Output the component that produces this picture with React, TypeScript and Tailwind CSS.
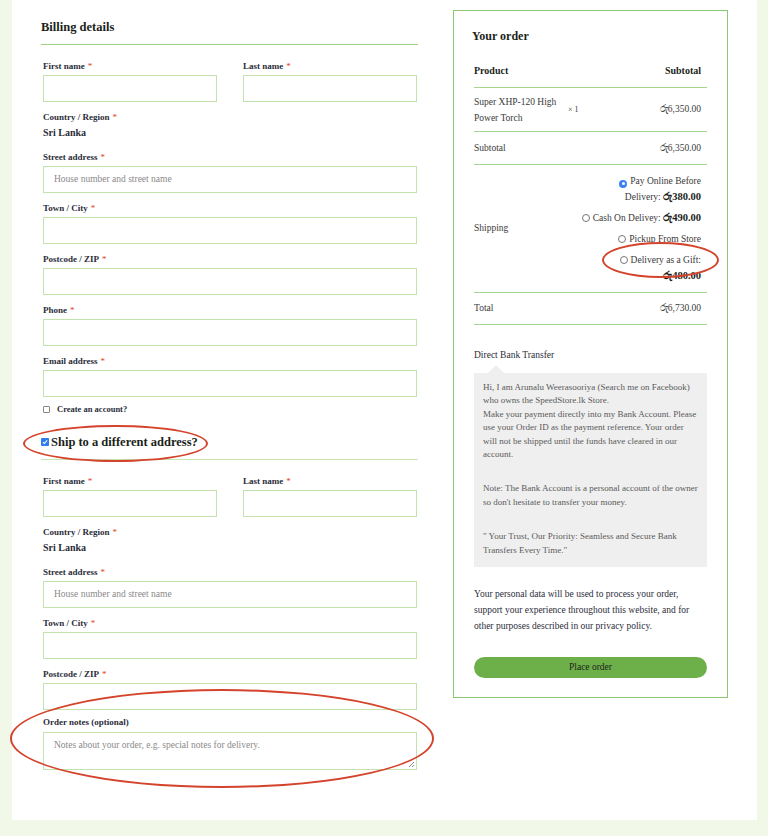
import React from "react";

const serif = { fontFamily: '"Liberation Serif", "DejaVu Serif", serif' };

function Label({ text, req = true }: { text: string; req?: boolean }) {
  return (
    <div className="h-[12px] text-[9px] leading-[12px] font-bold text-[#2b2d3a]">
      {text}
      {req && <span className="ml-[3px] text-[#e2401c] font-normal">*</span>}
    </div>
  );
}

function Field({ label, placeholder }: { label: string; placeholder?: string }) {
  return (
    <div className="flex w-full flex-col">
      <Label text={label} />
      <div className="mt-[3px] flex h-[27px] w-full items-center border border-[#c3e2ae] bg-white pl-[10px] text-[9.5px] text-[#8a8a8a]">
        {placeholder}
      </div>
    </div>
  );
}

function NameRow() {
  return (
    <div className="flex justify-between">
      <div className="w-[174px]">
        <Label text="First name" />
        <div className="mt-[3px] h-[27px] border border-[#c3e2ae]" />
      </div>
      <div className="w-[174px]">
        <Label text="Last name" />
        <div className="mt-[3px] h-[27px] border border-[#c3e2ae]" />
      </div>
    </div>
  );
}

function Country() {
  return (
    <div>
      <Label text="Country / Region" />
      <div className="mt-[3px] h-[14px] text-[10px] leading-[14px] font-bold text-[#2b2d3a]">Sri Lanka</div>
    </div>
  );
}

function Radio({ checked = false }: { checked?: boolean }) {
  return checked ? (
    <span className="mr-[3px] inline-flex h-[8px] w-[8px] items-center justify-center rounded-full bg-[#3b82f6] align-[-1px]">
      <span className="h-[3px] w-[3px] rounded-full bg-white" />
    </span>
  ) : (
    <span className="mr-[3px] inline-block h-[8px] w-[8px] rounded-full border border-[#777] bg-white align-[-1px]" />
  );
}

const Rs = "රු";

export default function App() {
  return (
    <div style={serif} className="relative h-[836px] w-[768px] overflow-hidden bg-[#f1f8e7]">
      <div className="ml-[12px] flex h-[820px] w-[745px] bg-white">
        {/* billing column */}
        <div className="ml-[29px] w-[377px] pt-[18px]">
          <div className="h-[18px] text-[12.5px] leading-[18px] font-bold text-[#1c1f1a]">Billing details</div>
          <div className="mt-[8px] h-px bg-[#9fd27f]" />
          <div className="mt-[15px] flex flex-col gap-[9px] pl-[2px] pr-[1px]">
            <NameRow />
            <Country />
            <div className="mt-[2px]"><Field label="Street address" placeholder="House number and street name" /></div>
            <Field label="Town / City" />
            <Field label="Postcode / ZIP" />
            <Field label="Phone" />
            <Field label="Email address" />
          </div>
          <div className="mt-[6px] flex h-[12px] items-center pl-[2px] text-[8.5px] font-bold text-[#2b2d3a]">
            <span className="mr-[7px] h-[7px] w-[7px] rounded-[1px] border border-[#888]" />
            Create an account?
          </div>
          <div className="mt-[18px] flex h-[18px] items-center text-[12.5px] font-bold text-[#1c1f1a]">
            <span className="mr-[2px] inline-flex h-[8px] w-[8px] items-center justify-center rounded-[1px] bg-[#2f7bf0]">
              <svg width="6" height="6" viewBox="0 0 10 10"><path d="M1.5 5.2 L4 7.6 L8.6 2.4" stroke="white" strokeWidth="1.8" fill="none" /></svg>
            </span>
            Ship to a different address?
          </div>
          <div className="mt-[8px] h-px bg-[#c7e6b4]" />
          <div className="mt-[15px] flex flex-col gap-[9px] pl-[2px] pr-[1px]">
            <NameRow />
            <Country />
            <div className="mt-[2px]"><Field label="Street address" placeholder="House number and street name" /></div>
            <Field label="Town / City" />
            <Field label="Postcode / ZIP" />
          </div>
          <div className="mt-[6px] pl-[2px] pr-[1px]">
            <Label text="Order notes (optional)" req={false} />
            <div className="relative mt-[4px] h-[38px] border border-[#c3e2ae] pl-[10px] pt-[5px] text-[9.5px] text-[#8a8a8a]">
              Notes about your order, e.g. special notes for delivery.
              <svg className="absolute right-[1px] bottom-[1px]" width="7" height="7" viewBox="0 0 7 7"><path d="M6 1 L1 6 M6 4 L4 6" stroke="#666" strokeWidth="0.8" /></svg>
            </div>
          </div>
        </div>

        {/* order column */}
        <div className="ml-[35px] mt-[10px] h-[688px] w-[275px] border border-[#8cc871] px-[20px] text-[9.5px] text-[#3a3a3a]">
          <div className="mt-[17px] ml-[-2px] h-[16px] text-[12px] leading-[16px] font-bold text-[#1c1f1a]">Your order</div>
          <div className="mt-[17px] flex h-[27px] items-start justify-between border-b border-[#a6d68e] pt-[2px] pr-[6px] text-[10px] font-bold text-[#1c1f1a]">
            <span>Product</span>
            <span>Subtotal</span>
          </div>
          <div className="flex h-[44px] items-center border-b border-[#a6d68e] pr-[6px]">
            <div className="w-[94px] leading-[16px]">Super XHP-120 High Power Torch</div>
            <span className="text-[8px]">× 1</span>
            <span className="ml-auto">{Rs}6,350.00</span>
          </div>
          <div className="flex h-[33px] items-center justify-between border-b border-[#a6d68e] pr-[6px]">
            <span>Subtotal</span>
            <span>{Rs}6,350.00</span>
          </div>
          <div className="flex h-[128px] items-center justify-between border-b border-[#a6d68e] pr-[6px]">
            <span>Shipping</span>
            <div className="w-[140px] text-right leading-[16px]">
              <div><Radio checked />Pay Online Before</div>
              <div>Delivery: <b className="text-[10.5px] text-[#1c1f1a]">{Rs}380.00</b></div>
              <div className="mt-[5px]"><Radio />Cash On Delivey: <b className="text-[10.5px] text-[#1c1f1a]">{Rs}490.00</b></div>
              <div className="mt-[5px]"><Radio />Pickup From Store</div>
              <div className="mt-[5px]"><Radio />Delivery as a Gift:</div>
              <div><b className="text-[10.5px] text-[#1c1f1a]">{Rs}480.00</b></div>
            </div>
          </div>
          <div className="flex h-[32px] items-center justify-between border-b border-[#a6d68e] pr-[6px]">
            <span>Total</span>
            <span>{Rs}6,730.00</span>
          </div>
          <div className="mt-[24px] h-[12px] leading-[12px] text-[#2b2d3a]">Direct Bank Transfer</div>
          <div className="ml-[14px] mt-[4px] h-0 w-0 border-x-[8px] border-b-[8px] border-x-transparent border-b-[#efefef]" />
          <div className="h-[194px] bg-[#efefef] px-[9px] pt-[8px] text-[9px] leading-[13.4px] text-[#5a5a5a]">
            <p>Hi, I am Arunalu Weerasooriya (Search me on Facebook) who owns the SpeedStore.lk Store.</p>
            <p>Make your payment directly into my Bank Account. Please use your Order ID as the payment reference. Your order will not be shipped until the funds have cleared in our account.</p>
            <p className="mt-[21px]">Note: The Bank Account is a personal account of the owner so don't hesitate to transfer your money.</p>
            <p className="mt-[21px]">" Your Trust, Our Priority: Seamless and Secure Bank Transfers Every Time."</p>
          </div>
          <p className="mt-[19px] text-[9.5px] leading-[16px] text-[#2b2d3a]">
            Your personal data will be used to process your order, support your experience throughout this website, and for other purposes described in our privacy policy.
          </p>
          <div className="mt-[23px] flex h-[21px] items-center justify-center rounded-full bg-[#6db04a] text-[9.5px] text-[#1c1f1a]">
            Place order
          </div>
        </div>
      </div>

      {/* annotation ellipses */}
      <div className="absolute left-[23px] top-[425px] h-[37px] w-[185px] rounded-[50%] border-2 border-[#d4432b]" />
      <div className="absolute left-[10px] top-[689px] h-[99px] w-[424px] rounded-[50%] border-[2.5px] border-[#d4432b]" />
      <div className="absolute left-[602px] top-[242px] h-[36px] w-[117px] rounded-[50%] border-2 border-[#d4432b]" />
    </div>
  );
}
